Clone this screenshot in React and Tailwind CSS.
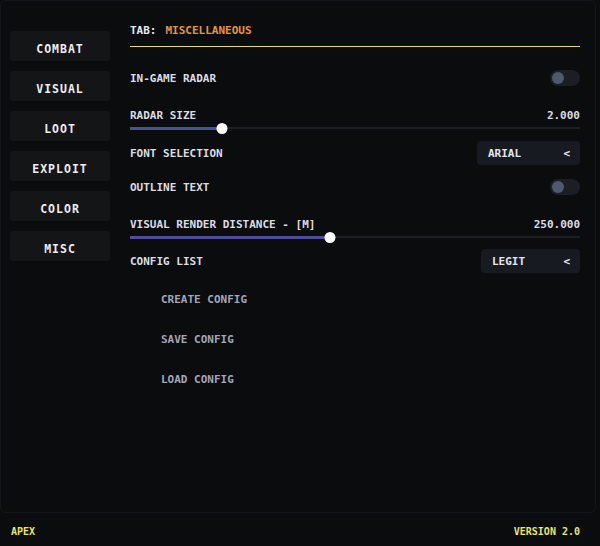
import { useState } from "react";

const tabs = ["COMBAT", "VISUAL", "LOOT", "EXPLOIT", "COLOR", "MISC"];

const font = "font-['DejaVu_Sans_Mono',monospace] font-bold uppercase";

function Toggle({ on }) {
  return (
    <div className="w-[30px] h-[16px] rounded-full bg-[#1b1e24] flex items-center px-[2px]">
      <div
        className={`w-[12px] h-[12px] rounded-full ${
          on ? "ml-auto bg-[#e6d77a]" : "bg-[#4f596c]"
        }`}
      ></div>
    </div>
  );
}

function Slider({ label, value, pct }) {
  return (
    <div className="mt-[23px]">
      <div className="flex justify-between items-center h-[12px] pt-[2px] text-[11px] text-[#dcdde2]">
        <span>{label}</span>
        <span>{value}</span>
      </div>
      <div className="relative h-[14px] flex items-center">
        <div className="w-full h-[2px] bg-[#1c1e24]"></div>
        <div
          className="absolute left-0 h-[3px] bg-[#4a4e9c]"
          style={{ width: pct + "%" }}
        ></div>
        <div
          className="absolute w-[11px] h-[11px] rounded-full bg-white -translate-x-1/2"
          style={{ left: pct + "%" }}
        ></div>
      </div>
    </div>
  );
}

function Dropdown({ value, width }) {
  return (
    <div
      className={`h-[24px] rounded-[4px] bg-[#171a21] flex items-center justify-between pl-[11px] pr-[10px] pt-[2px] text-[11px] text-[#e4e5ea] ${width}`}
    >
      <span>{value}</span>
      <span>&lt;</span>
    </div>
  );
}

export default function App() {
  const [active, setActive] = useState("MISC");

  return (
    <div className={`w-[600px] h-[546px] bg-[#0a0c0e] flex flex-col ${font}`}>
      <div className="h-[513px] w-[596px] border border-[#14171a] rounded-md flex">
        {/* sidebar */}
        <aside className="w-[129px] shrink-0 pt-[30px] pl-[9px] flex flex-col gap-[10px]">
          {tabs.map((t) => (
            <button
              key={t}
              onClick={() => setActive(t)}
              className="w-[100px] h-[30px] rounded-[3px] bg-[#131517] pt-[8px] text-[11.5px] tracking-[1px] text-[#eeeef0] flex items-center justify-center"
            >
              {t}
            </button>
          ))}
        </aside>

        {/* main panel */}
        <main className="w-[450px] pt-[22px] flex flex-col">
          <div className="h-[24px] border-b border-[#e6d77a] flex items-start pt-[1px] text-[11px] leading-[14px]">
            <span className="text-[#e8e8ec]">TAB:</span>
            <span className="ml-[9px] text-[#e8953a]">MISCELLANEOUS</span>
          </div>

          <div className="mt-[23px] h-[16px] flex justify-between items-center text-[11px] text-[#dcdde2]">
            <span className="pt-[3px]">IN-GAME RADAR</span>
            <Toggle on={false} />
          </div>

          <Slider label="RADAR SIZE" value="2.000" pct={20.5} />

          <div className="mt-[6px] flex justify-between items-center text-[11px] text-[#dcdde2]">
            <span className="pt-[2px]">FONT SELECTION</span>
            <Dropdown value="ARIAL" width="w-[103px]" />
          </div>

          <div className="mt-[14px] h-[16px] flex justify-between items-center text-[11px] text-[#dcdde2]">
            <span className="pt-[2px]">OUTLINE TEXT</span>
            <Toggle on={false} />
          </div>

          <Slider label="VISUAL RENDER DISTANCE - [M]" value="250.000" pct={44.5} />

          <div className="mt-[5px] flex justify-between items-center text-[11px] text-[#dcdde2]">
            <span className="pt-[2px]">CONFIG LIST</span>
            <Dropdown value="LEGIT" width="w-[99px]" />
          </div>

          <div className="mt-[6px] pl-[31px] flex flex-col text-[11px] text-[#a3a5b8]">
            <button className="h-[40px] pt-[2px] text-left">CREATE CONFIG</button>
            <button className="h-[40px] pt-[2px] text-left">SAVE CONFIG</button>
            <button className="h-[40px] pt-[2px] text-left">LOAD CONFIG</button>
          </div>
        </main>
      </div>

      <footer className="flex-1 flex items-center justify-between pt-[4px] pl-[11px] pr-[20px] text-[10px] text-[#ebe36a]">
        <span>APEX</span>
        <span>VERSION 2.0</span>
      </footer>
    </div>
  );
}
